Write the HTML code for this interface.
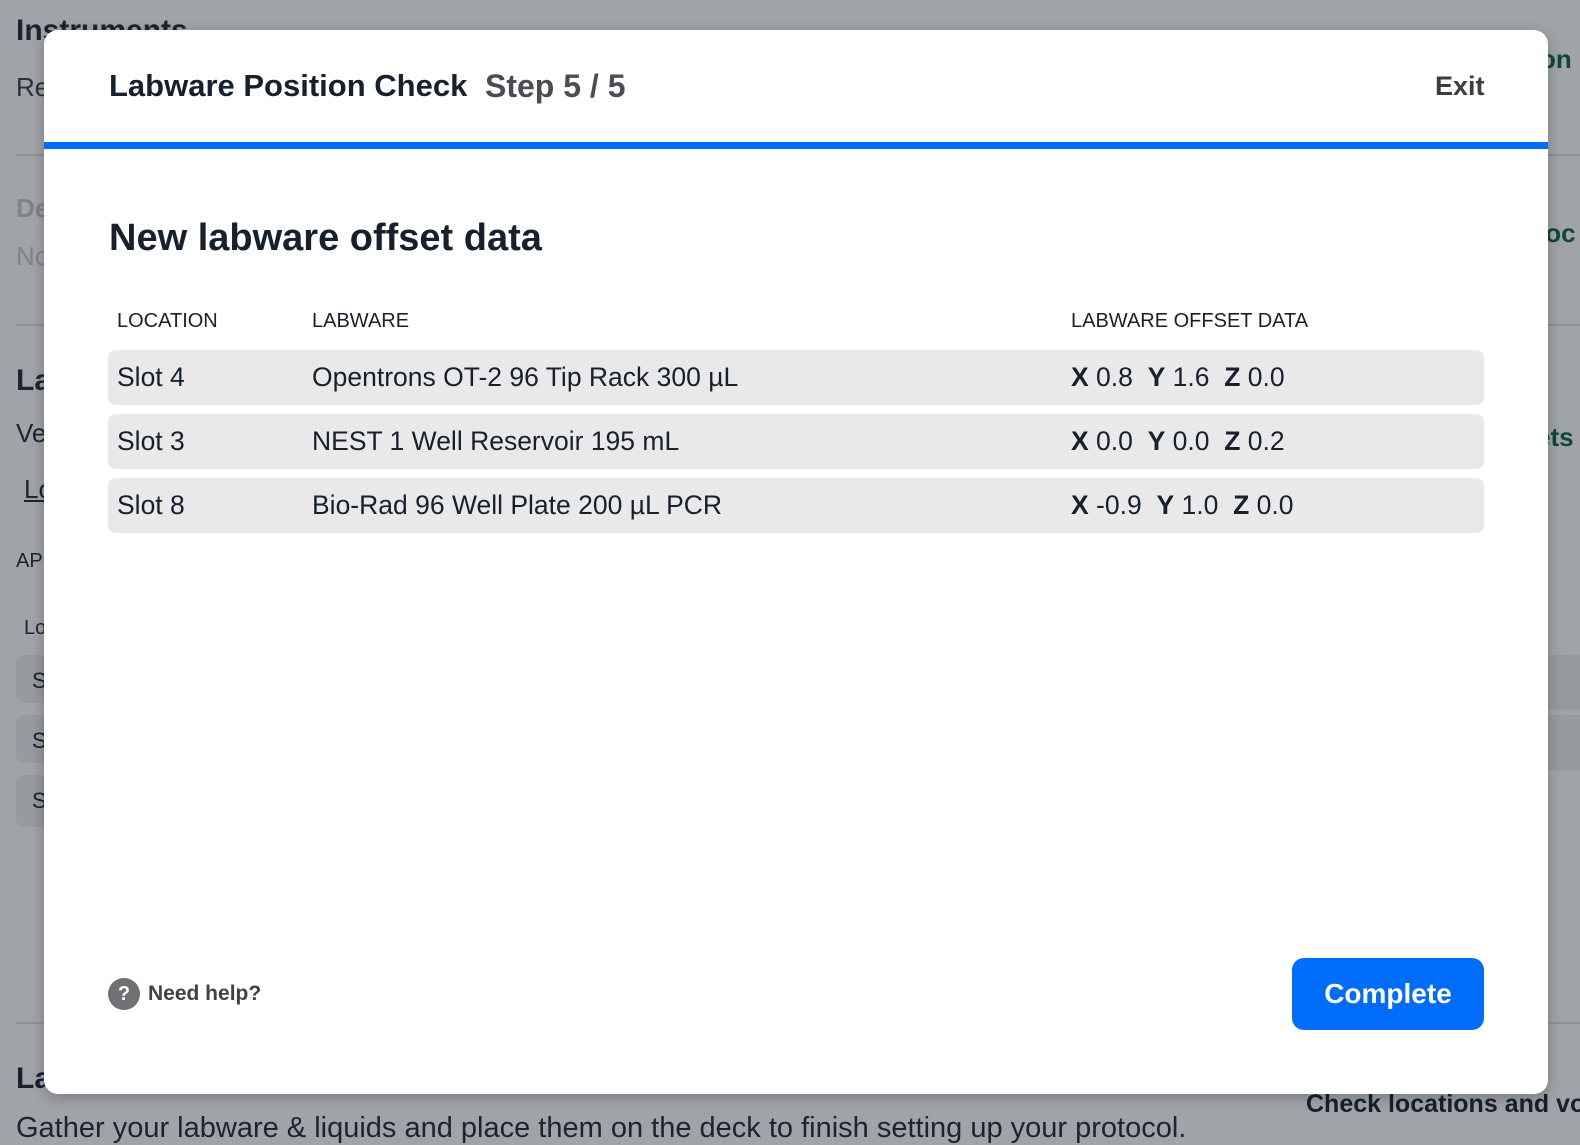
<!DOCTYPE html>
<html><head><meta charset="utf-8"><style>
*{margin:0;padding:0;box-sizing:border-box}
body{width:1580px;height:1142px;overflow:hidden;background:#a0a3a8;font-family:"Liberation Sans",sans-serif;position:relative;color:#16212d}
.bg{position:absolute;white-space:nowrap}
.line{position:absolute;height:2px;background:#8f9297}
.modal{position:absolute;left:44px;top:30px;width:1504px;height:1064px;background:#fff;border-radius:14px;box-shadow:0 4px 14px rgba(0,0,0,.25);overflow:hidden}
.t{position:absolute;white-space:nowrap}
.row{position:absolute;left:64px;width:1376px;height:55px;background:#e9e9e9;border-radius:8px;font-size:26.5px}
.row span{position:absolute;top:12px}
</style></head><body>
<div class="bg" style="left:16px;top:14px;font-size:30px;font-weight:bold;color:#1c2430">Instruments</div>
<div class="bg" style="left:16px;top:72px;font-size:26px;color:#2a313a">Re</div>
<div class="line" style="left:16px;top:154px;width:30px"></div>
<div class="bg" style="left:16px;top:193px;font-size:26px;font-weight:bold;color:#7f8287">De</div>
<div class="bg" style="left:16px;top:241px;font-size:26px;color:#7f8287">No</div>
<div class="line" style="left:16px;top:324px;width:30px"></div>
<div class="bg" style="left:16px;top:364px;font-size:30px;font-weight:bold;color:#1c2430">La</div>
<div class="bg" style="left:16px;top:418px;font-size:26px;color:#1c2430">Ve</div>
<div class="bg" style="left:24px;top:474px;font-size:26px;color:#1c2430;text-decoration:underline">Lo</div>
<div class="bg" style="left:16px;top:550px;font-size:20px;color:#1c2430">AP</div>
<div class="bg" style="left:24px;top:617px;font-size:20px;color:#1c2430">Lo</div>
<div style="position:absolute;left:16px;top:655px;width:40px;height:48px;background:#979a9f;border-radius:8px"></div>
<div style="position:absolute;left:16px;top:715px;width:40px;height:48px;background:#979a9f;border-radius:8px"></div>
<div style="position:absolute;left:16px;top:775px;width:40px;height:52px;background:#979a9f;border-radius:8px"></div>
<div class="bg" style="left:32px;top:668px;font-size:22px">S</div>
<div class="bg" style="left:32px;top:728px;font-size:22px">S</div>
<div class="bg" style="left:32px;top:788px;font-size:22px">S</div>
<div class="line" style="left:16px;top:1022px;width:1564px"></div>
<div class="bg" style="left:16px;top:1062px;font-size:30px;font-weight:bold">La</div>
<div class="bg" style="left:16px;top:1112px;font-size:29px;color:#1c2430">Gather your labware &amp; liquids and place them on the deck to finish setting up your protocol.</div>
<div class="bg" style="left:1306px;top:1090px;font-size:25px;font-weight:bold">Check locations and vo</div>
<div class="bg" style="left:1540px;top:44px;font-size:26px;font-weight:bold;color:#0d4a35">on</div>
<div class="line" style="left:1548px;top:154px;width:32px"></div>
<div class="bg" style="left:1538px;top:218px;font-size:26px;font-weight:bold;color:#0d4a35">loc</div>
<div class="line" style="left:1548px;top:324px;width:32px"></div>
<div class="bg" style="left:1536px;top:422px;font-size:26px;font-weight:bold;color:#0d4a35">ets</div>
<div style="position:absolute;left:1548px;top:655px;width:32px;height:55px;background:#979a9f"></div>
<div style="position:absolute;left:1548px;top:715px;width:32px;height:55px;background:#979a9f"></div>

<div class="modal">
 <div class="t" style="left:65px;top:38px;font-size:31px;font-weight:bold;color:#16212d">Labware Position Check</div>
 <div class="t" style="left:441px;top:38px;font-size:32px;font-weight:bold;color:#4a4d52">Step 5 / 5</div>
 <div class="t" style="left:1391px;top:41px;font-size:27px;font-weight:bold;color:#3a3d42">Exit</div>
 <div style="position:absolute;left:0;top:112px;width:1504px;height:7px;background:#006cfa"></div>
 <div class="t" style="left:65px;top:187px;font-size:38px;font-weight:bold;color:#16212d">New labware offset data</div>
 <div class="t" style="left:73px;top:280px;font-size:20px;color:#16212d">LOCATION</div>
 <div class="t" style="left:268px;top:280px;font-size:20px;color:#16212d">LABWARE</div>
 <div class="t" style="left:1027px;top:280px;font-size:20px;color:#16212d">LABWARE OFFSET DATA</div>
 <div class="row" style="top:320px"><span style="left:9px">Slot 4</span><span style="left:204px">Opentrons OT-2 96 Tip Rack 300 µL</span><span style="left:963px"><b>X</b> 0.8 &nbsp;<b>Y</b> 1.6 &nbsp;<b>Z</b> 0.0</span></div>
 <div class="row" style="top:384px"><span style="left:9px">Slot 3</span><span style="left:204px">NEST 1 Well Reservoir 195 mL</span><span style="left:963px"><b>X</b> 0.0 &nbsp;<b>Y</b> 0.0 &nbsp;<b>Z</b> 0.2</span></div>
 <div class="row" style="top:448px"><span style="left:9px">Slot 8</span><span style="left:204px">Bio-Rad 96 Well Plate 200 µL PCR</span><span style="left:963px"><b>X</b> -0.9 &nbsp;<b>Y</b> 1.0 &nbsp;<b>Z</b> 0.0</span></div>
 <div style="position:absolute;left:64px;top:948px;width:32px;height:32px;border-radius:50%;background:#6f7175;color:#fff;font-size:20px;font-weight:bold;text-align:center;line-height:32px">?</div>
 <div class="t" style="left:104px;top:952px;font-size:21px;font-weight:bold;color:#3f4247">Need help?</div>
 <div style="position:absolute;left:1248px;top:928px;width:192px;height:72px;border-radius:12px;background:#006cfa;color:#fff;font-size:28px;font-weight:bold;text-align:center;line-height:72px">Complete</div>
</div>
</body></html>
